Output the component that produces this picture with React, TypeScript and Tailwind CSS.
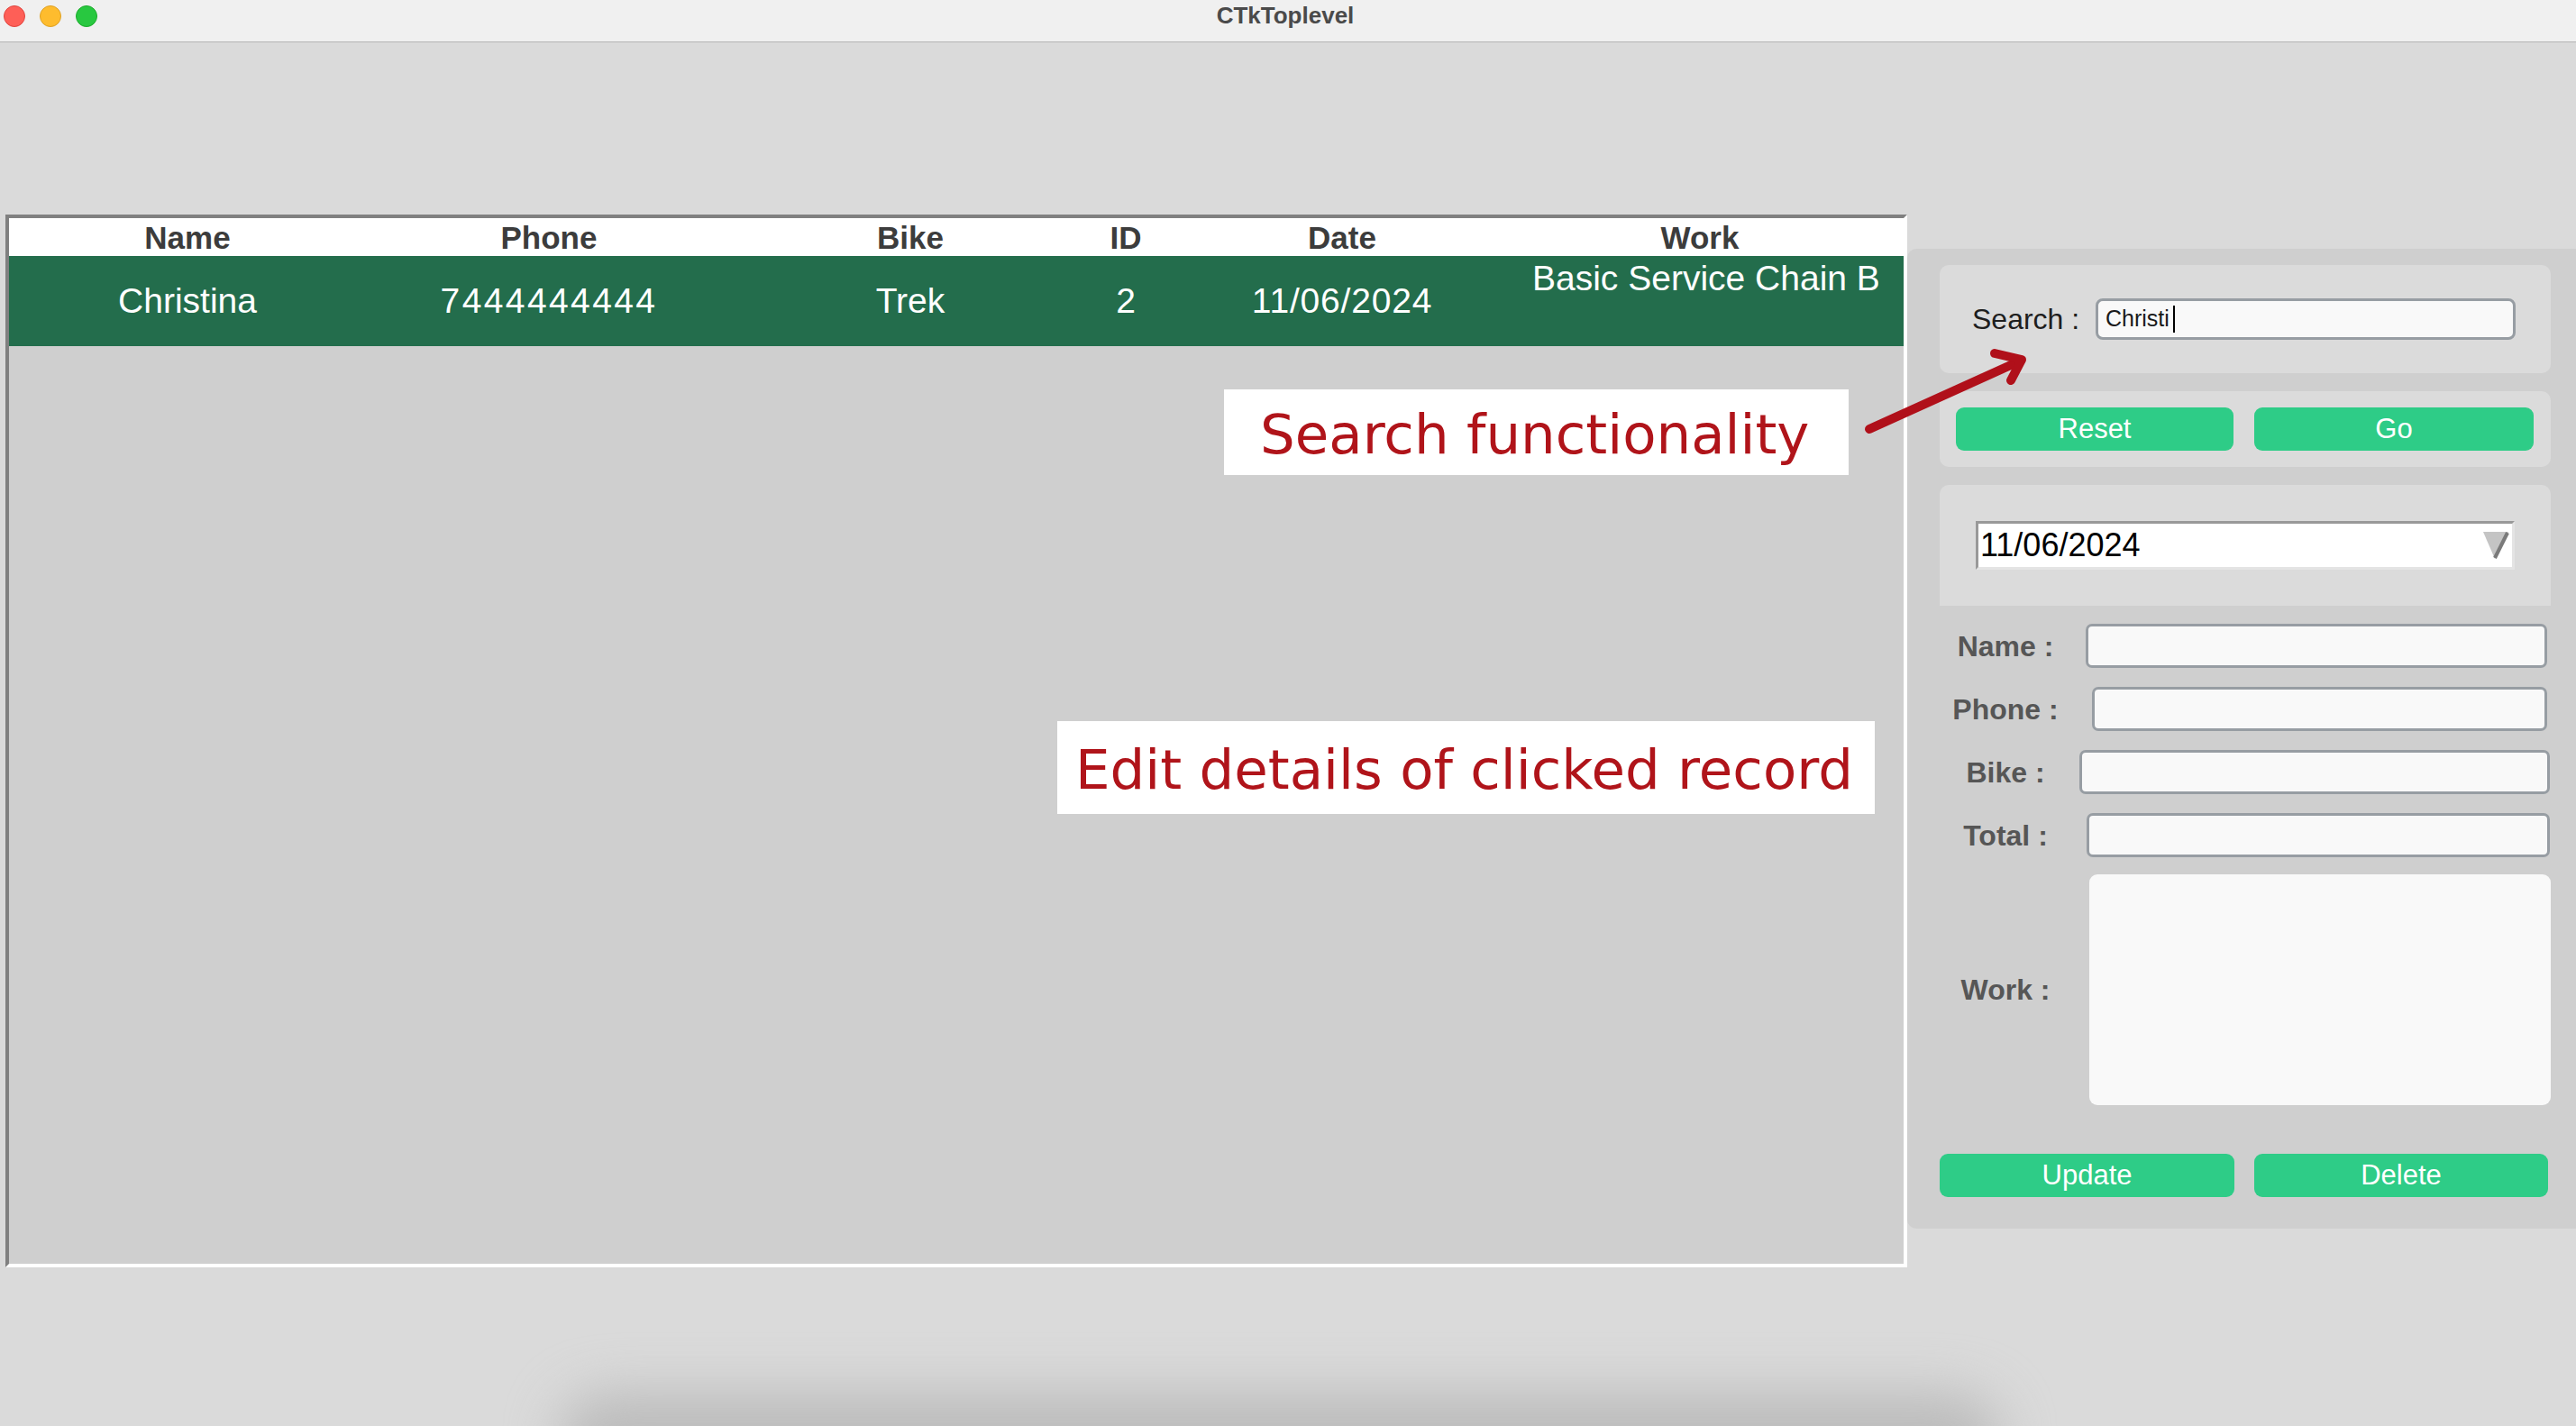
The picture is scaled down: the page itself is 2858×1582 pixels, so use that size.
import React from "react";

const cols = ["Name", "Phone", "Bike", "ID", "Date", "Work"];

function Field({ label, ml, w }: { label: string; ml: string; w: string }) {
  return (
    <div className="flex items-center h-[49px]">
      <div className="w-[146px] text-center text-[32px] font-bold text-[#565656]">{label}</div>
      <div className={`${ml} ${w} h-[49px] rounded-[7px] border-[3px] border-[#979da3] bg-[#f9f9f9]`} />
    </div>
  );
}

function GreenButton({ text, w }: { text: string; w: string }) {
  return (
    <div className={`${w} h-[48px] rounded-[9px] bg-[#2ecc87] flex items-center justify-center text-white text-[31px]`}>
      {text}
    </div>
  );
}

export default function App() {
  return (
    <div className="relative w-[2858px] h-[1582px] overflow-hidden bg-[#dadada] font-['Liberation_Sans',Arial,sans-serif]">
      {/* window title bar */}
      <div className="h-[47px] bg-[#f0f0f0] border-b border-[#b4b4b4] grid grid-cols-[1fr_auto_1fr] items-start">
        <div className="flex items-center gap-[16px] pl-[4px] pt-[6px]">
          <span className="w-[24px] h-[24px] rounded-full bg-[#fe5f57] border border-[#e0443e]" />
          <span className="w-[24px] h-[24px] rounded-full bg-[#febc2e] border border-[#dea123]" />
          <span className="w-[24px] h-[24px] rounded-full bg-[#28c840] border border-[#1aab29]" />
        </div>
        <div className="pt-[2px] text-[26px] leading-[30px] font-bold text-[#4a4a4a] pr-[6px]">CTkToplevel</div>
        <div />
      </div>

      <div className="flex items-start">
        {/* records table */}
        <div className="ml-[6px] mt-[191px] w-[2112px] h-[1168px] border-4 border-t-[#808080] border-l-[#808080] border-r-white border-b-white bg-[#cfcfcf]">
          <div className="grid grid-cols-[396px_406px_396px_82px_398px_396px_1fr] h-[42px] bg-white items-center text-[35px] font-bold text-[#3c3c3c]">
            {cols.map((c) => (
              <div key={c} className="text-center leading-none">{c}</div>
            ))}
            <div />
          </div>
          <div className="grid grid-cols-[396px_406px_396px_82px_398px_396px_1fr] h-[100px] bg-[#236d4c] items-center text-[39px] text-white">
            <div className="text-center">Christina</div>
            <div className="text-center tracking-[2.4px]">7444444444</div>
            <div className="text-center">Trek</div>
            <div className="text-center">2</div>
            <div className="text-center tracking-[0.8px]">11/06/2024</div>
            <div className="self-start pt-[3px] pl-[12px] leading-[44px] whitespace-nowrap overflow-hidden">
              Basic Service Chain Brake Adjustment
            </div>
            <div />
          </div>
        </div>

        {/* edit panel */}
        <div className="flex-1 mt-[229px] h-[1087px] bg-[#cfcfcf] rounded-l-[10px] pl-[36px] pr-[28px] pt-[18px] flex flex-col">
          <div className="h-[120px] rounded-[10px] bg-[#dbdbdb] pt-[37px] pl-[36px] flex items-start">
            <div className="h-[46px] flex items-center text-[32px] text-[#1e1e1e] w-[137px]">Search :</div>
            <div className="w-[466px] h-[46px] rounded-[8px] border-[3px] border-[#979da3] bg-[#f9f9f9] flex items-center pl-[8px] text-[25px] text-[#1a1a1a]">
              Christi<span className="ml-[4px] w-[2px] h-[30px] bg-black" />
            </div>
          </div>

          <div className="mt-[20px] h-[84px] rounded-[10px] bg-[#dbdbdb] pt-[18px] pl-[18px] flex gap-[23px]">
            <GreenButton text="Reset" w="w-[308px]" />
            <GreenButton text="Go" w="w-[310px]" />
          </div>

          <div className="mt-[20px] h-[134px] rounded-t-[10px] bg-[#dbdbdb] pt-[40px] pl-[40px]">
            <div className="w-[598px] h-[54px] bg-white border-[3px] border-t-[#999999] border-l-[#999999] border-r-[#e4e4e4] border-b-[#e4e4e4] flex items-center justify-between pl-[2px] pr-[3px]">
              <span className="text-[36px] text-black">11/06/2024</span>
              <svg width="30" height="32" viewBox="0 0 30 32">
                <polygon points="1,1 29,1 14,31" fill="#c4c4c4" />
                <line x1="28" y1="2" x2="14" y2="30" stroke="#7a7a7a" strokeWidth="4" />
              </svg>
            </div>
          </div>

          <div className="mt-[20px] flex flex-col gap-[21px]">
            <Field label="Name :" ml="ml-[16px]" w="w-[512px]" />
            <Field label="Phone :" ml="ml-[23px]" w="w-[505px]" />
            <Field label="Bike :" ml="ml-[9px]" w="w-[522px]" />
            <Field label="Total :" ml="ml-[17px]" w="w-[514px]" />
          </div>

          <div className="mt-[19px] flex items-center">
            <div className="w-[146px] text-center text-[32px] font-bold text-[#565656]">Work :</div>
            <div className="ml-[20px] w-[512px] h-[256px] rounded-[9px] bg-[#f9f9f9]" />
          </div>

          <div className="mt-[54px] flex gap-[22px]">
            <GreenButton text="Update" w="w-[327px]" />
            <GreenButton text="Delete" w="w-[326px]" />
          </div>
        </div>
      </div>

      {/* annotations laid over the screenshot */}
      <div className="absolute left-[1358px] top-[432px] w-[693px] h-[95px] bg-white pl-[40px] pt-[14px] font-['DejaVu_Sans',sans-serif] text-[61px] leading-[71px] text-[#b0141a] whitespace-nowrap">
        Search functionality
      </div>
      <div className="absolute left-[1173px] top-[800px] w-[907px] h-[103px] bg-white pl-[20px] pt-[18px] font-['DejaVu_Sans',sans-serif] text-[61px] leading-[71px] text-[#b0141a] whitespace-nowrap">
        Edit details of clicked record
      </div>
      <svg className="absolute left-0 top-0" width="2858" height="1582" viewBox="0 0 2858 1582" fill="none">
        <g stroke="#b0101a" strokeWidth="10" strokeLinecap="round" strokeLinejoin="round">
          <line x1="2074" y1="476" x2="2242" y2="400" />
          <polyline points="2213,392 2243,399 2231,422" />
        </g>
      </svg>

      {/* soft shadow at the bottom edge */}
      <div className="absolute left-[620px] top-[1545px] w-[1600px] h-[110px] rounded-full bg-[#bcbcbc] blur-[28px]" />
    </div>
  );
}
